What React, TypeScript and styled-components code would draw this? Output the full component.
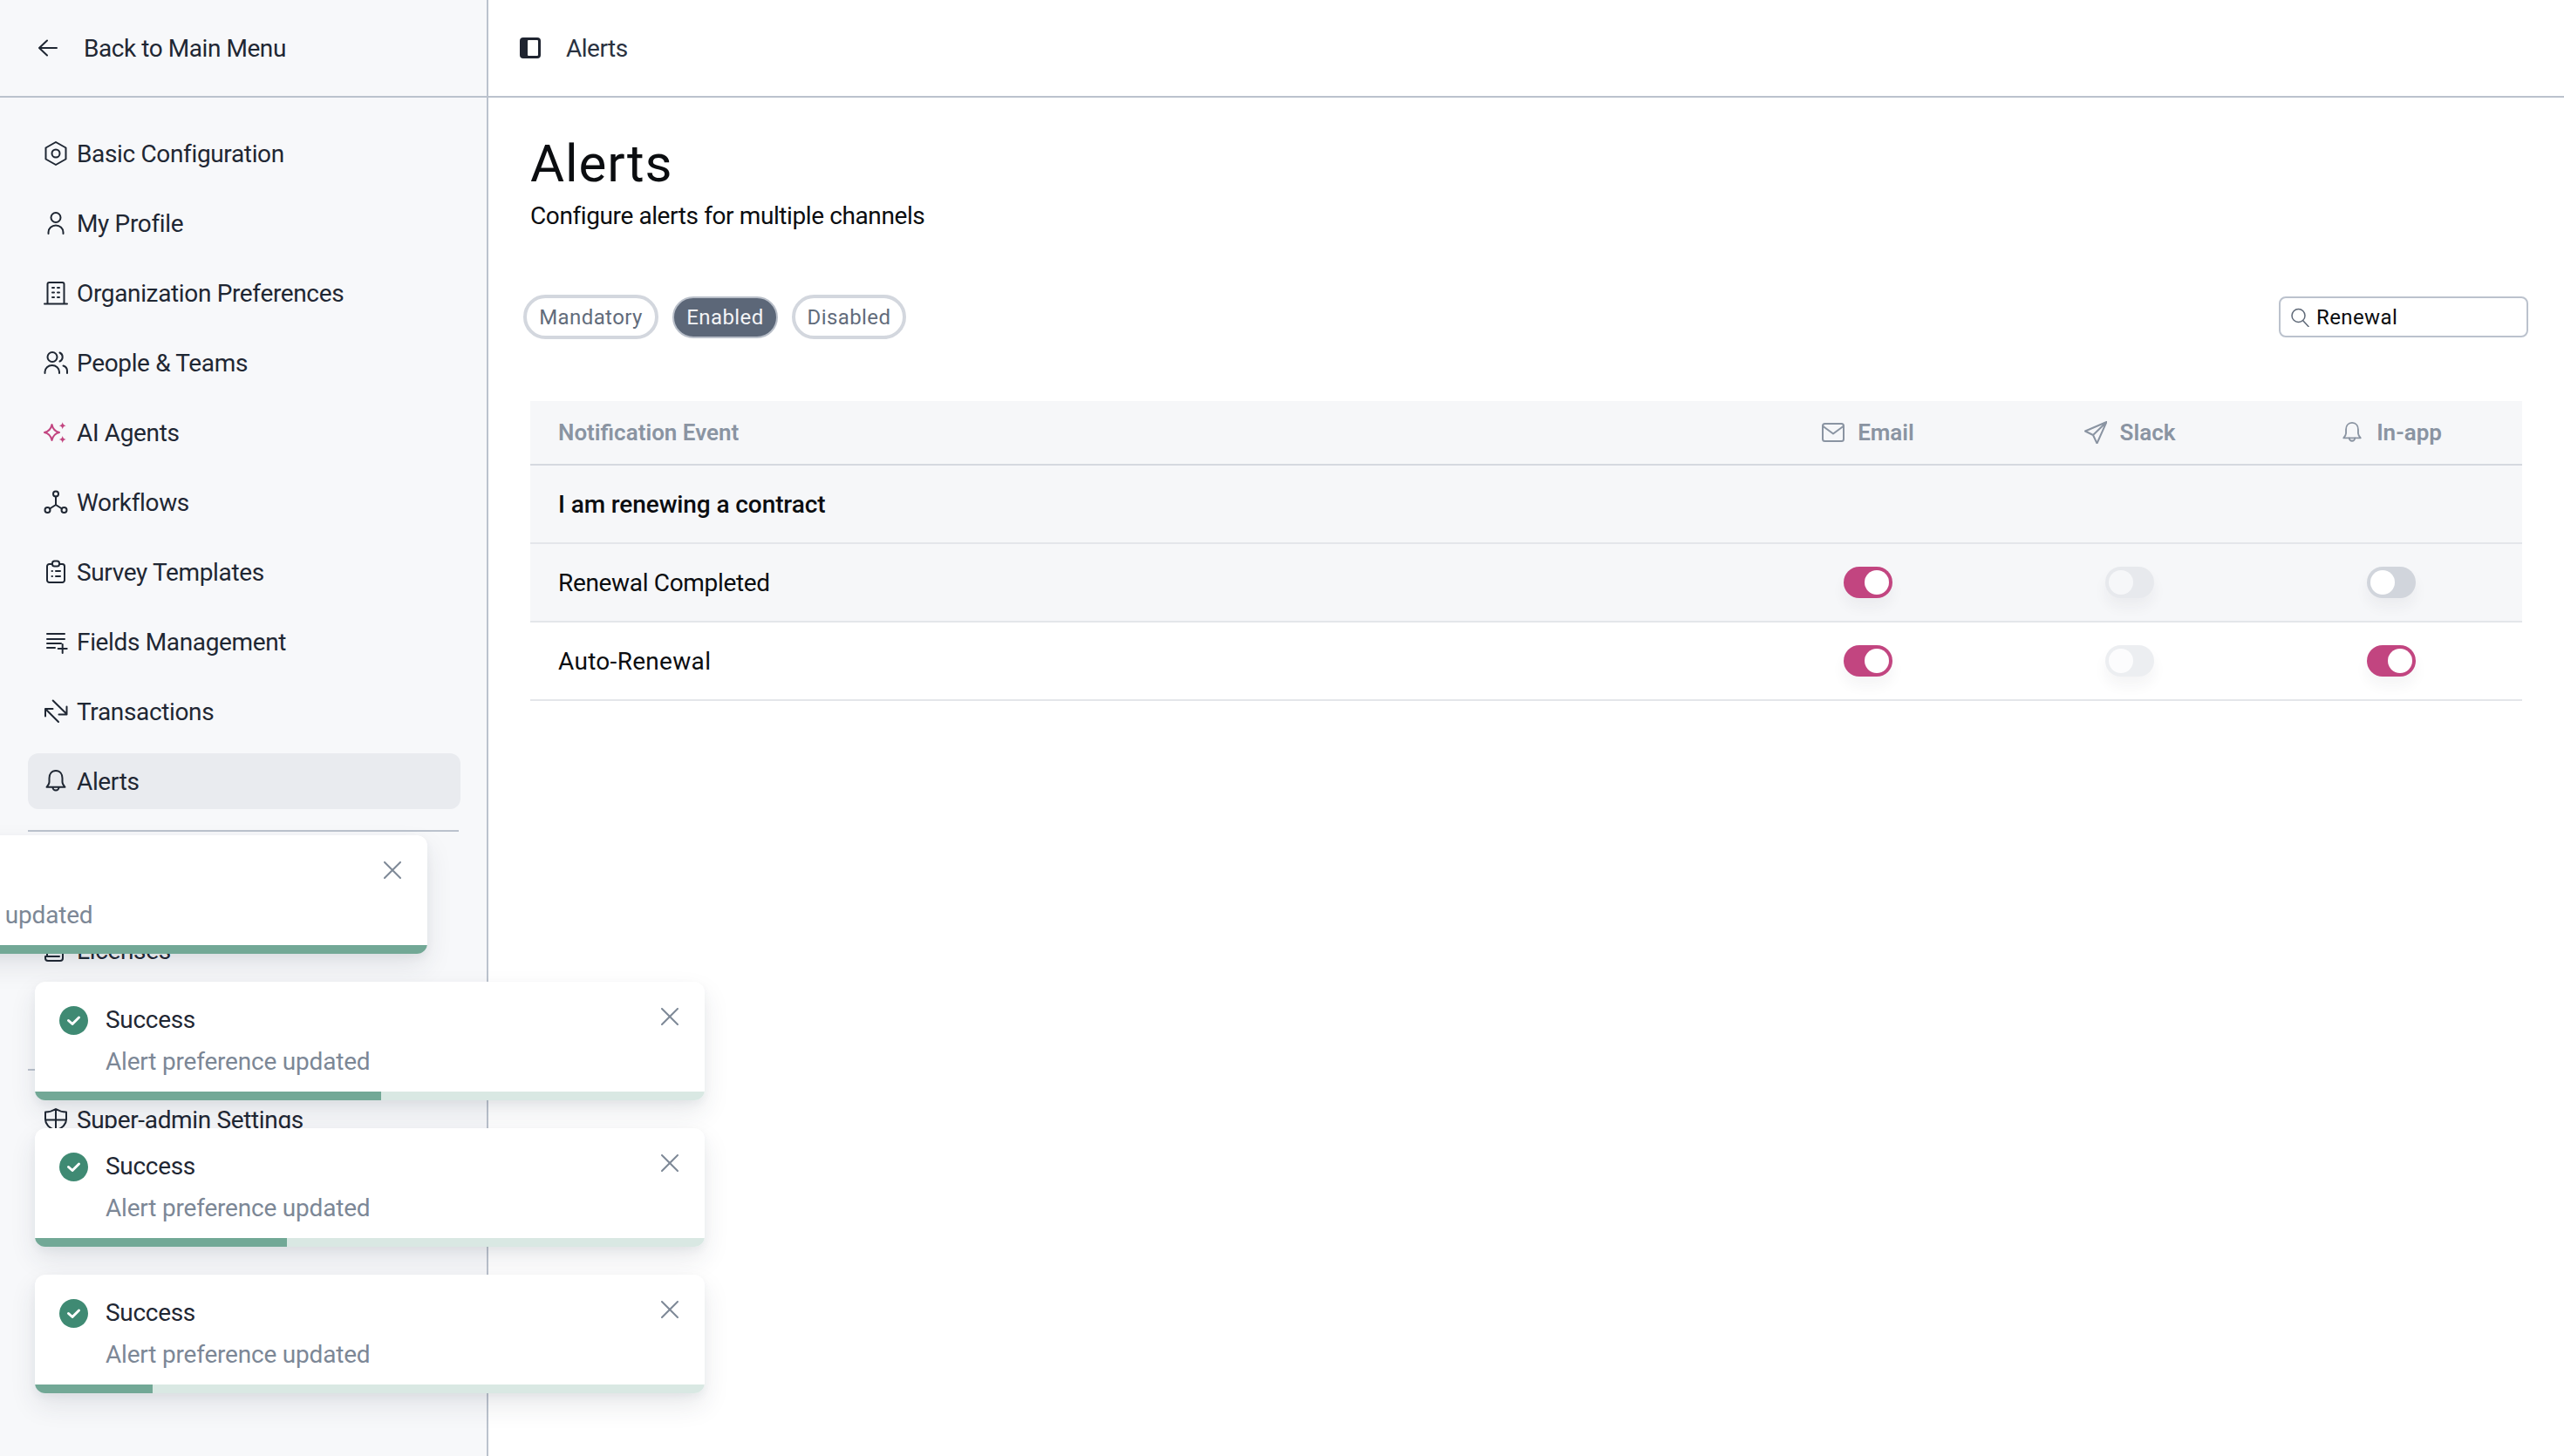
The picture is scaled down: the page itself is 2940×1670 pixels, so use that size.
import React from "react";
import styled, { createGlobalStyle } from "styled-components";

const Global = createGlobalStyle`
  * { box-sizing: border-box; }
  html, body { margin: 0; padding: 0; background: #fff; overflow: hidden; }
  body { font-family: Roboto, "Liberation Sans", sans-serif; color: #1f2733; }
`;

const Page = styled.div`
  display: flex;
  width: 2940px;
  height: 1670px;
  position: relative;
  overflow: hidden;
`;

const Sidebar = styled.aside`
  flex: 0 0 560px;
  background: #f7f8fa;
  border-right: 2px solid #bbc2cd;
  display: flex;
  flex-direction: column;
`;

const SideHeader = styled.div`
  height: 112px;
  border-bottom: 2px solid #bbc2cd;
  display: flex;
  align-items: center;
  gap: 30px;
  padding-left: 44px;
  font-size: 28px;
  letter-spacing: -0.44px;
  font-weight: 400;
  color: #1f2733;
`;

const Nav = styled.nav`
  padding: 32px 30px 0 32px;
  display: flex;
  flex-direction: column;
  gap: 16px;
`;

const NavRow = styled.div<{ $active?: boolean }>`
  height: 64px;
  border-radius: 12px;
  display: flex;
  align-items: center;
  gap: 10px;
  padding-left: 18px;
  font-size: 28px;
  letter-spacing: -0.35px;
  color: #1f2733;
  background: ${(p) => (p.$active ? "#e9ebef" : "transparent")};
`;

const Divider = styled.hr`
  border: 0;
  height: 2px;
  background: #bbc2cd;
  margin: 8px 0;
  width: 494px;
`;

const Main = styled.main`
  flex: 1;
  min-width: 0;
  display: flex;
  flex-direction: column;
`;

const TopBar = styled.header`
  height: 112px;
  border-bottom: 2px solid #bbc2cd;
  display: flex;
  align-items: center;
  gap: 29px;
  padding-left: 36px;
  font-size: 28px;
  letter-spacing: -0.5px;
  color: #2a3240;
`;

const Content = styled.div`
  padding: 40px 48px 0;
`;

const Title = styled.h1`
  margin: 0;
  font-size: 60px;
  line-height: 72px;
  letter-spacing: 0.9px;
  font-weight: 400;
  color: #0b0d10;
`;

const Subtitle = styled.p`
  margin: 4px 0 0;
  font-size: 28px;
  line-height: 40px;
  letter-spacing: -0.4px;
  color: #0b0d10;
`;

const Filters = styled.div`
  display: flex;
  align-items: center;
  justify-content: space-between;
  margin: 70px -7px 0 -8px;
  height: 51px;
`;

const Pills = styled.div`
  display: flex;
  align-items: center;
  gap: 16px;
`;

const Pill = styled.div<{ $on?: boolean; $w: number }>`
  width: ${(p) => p.$w}px;
  height: ${(p) => (p.$on ? 48 : 51)}px;
  border-radius: 26px;
  border: ${(p) => (p.$on ? "2px solid #b9bfc9" : "4px solid #d3d7de")};
  background: ${(p) => (p.$on ? "#5c6778" : "#fff")};
  color: ${(p) => (p.$on ? "#f3f4f6" : "#626c7b")};
  font-size: 24px;
  letter-spacing: 0.4px;
  display: flex;
  align-items: center;
  justify-content: center;
`;

const SearchBox = styled.div`
  width: 286px;
  height: 47px;
  border: 2px solid #bbc2cd;
  border-radius: 8px;
  background: #fff;
  display: flex;
  align-items: center;
  gap: 8px;
  padding-left: 11px;
  font-size: 24px;
  letter-spacing: 0.4px;
  color: #0b0d10;
`;

const Table = styled.div`
  margin-top: 71px;
  display: flex;
  flex-direction: column;
`;

const Row = styled.div<{ $bg?: string; $h: number; $line: string }>`
  display: grid;
  grid-template-columns: 1fr 300px 300px 300px;
  align-items: center;
  height: ${(p) => p.$h}px;
  background: ${(p) => p.$bg ?? "transparent"};
  border-bottom: 2px solid ${(p) => p.$line};
`;

const EventCell = styled.div<{ $strong?: boolean; $track?: number }>`
  padding-left: 32px;
  font-size: 28px;
  letter-spacing: ${(p) => p.$track ?? 0}px;
  font-weight: ${(p) => (p.$strong ? 500 : 400)};
  color: #0b0d10;
`;

const HeadCell = styled.div`
  padding-left: 32px;
  font-size: 26px;
  font-weight: 600;
  color: #8a94a2;
`;

const ChannelHead = styled.div`
  display: flex;
  align-items: center;
  justify-content: center;
  gap: 15px;
  font-size: 26px;
  font-weight: 600;
  color: #8a94a2;
`;

const ToggleCell = styled.div`
  display: flex;
  justify-content: center;
`;

const Track = styled.div<{ $on?: boolean; $tone?: "normal" | "dim" | "faint" }>`
  width: 56px;
  height: 36px;
  border-radius: 18px;
  padding: 4px;
  display: flex;
  justify-content: ${(p) => (p.$on ? "flex-end" : "flex-start")};
  box-shadow: 0 10px 16px rgba(30, 40, 60, 0.05);
  background: ${(p) =>
    p.$on ? "#c24580" : p.$tone === "dim" ? "#e7e9ed" : p.$tone === "faint" ? "#eceef1" : "#d1d5dc"};
`;

const Thumb = styled.div<{ $tone?: "normal" | "dim" | "faint" }>`
  width: 28px;
  height: 28px;
  border-radius: 50%;
  background: ${(p) => (p.$tone === "dim" ? "#f6f7f9" : p.$tone === "faint" ? "#fcfcfd" : "#fff")};
`;

const ToastStack = styled.div`
  position: absolute;
  left: 40px;
  top: 958px;
  display: flex;
  flex-direction: column;
  gap: 32px;
  z-index: 5;
`;

const ToastCard = styled.div<{ $shift?: number }>`
  width: 768px;
  height: 136px;
  background: #fff;
  border-radius: 12px;
  overflow: hidden;
  display: flex;
  flex-direction: column;
  box-shadow: 0 14px 30px rgba(40, 50, 70, 0.1), 0 4px 10px rgba(40, 50, 70, 0.05);
  transform: translateX(${(p) => p.$shift ?? 0}px);
`;

const ToastBody = styled.div`
  flex: 1;
  display: grid;
  grid-template-columns: 33px 1fr 20px;
  column-gap: 20px;
  padding: 26px 30px 0 28px;
  align-content: start;
`;

const ToastMark = styled.svg`
  display: block;
  width: 33px;
  height: 33px;
  margin-top: 2px;
`;

const ToastTitle = styled.div`
  font-size: 28px;
  line-height: 36px;
  letter-spacing: -0.3px;
  color: #1f2733;
`;

const ToastText = styled.div`
  grid-column: 2 / 3;
  margin-top: 12px;
  font-size: 28px;
  line-height: 36px;
  letter-spacing: -0.2px;
  color: #7c8796;
`;

const ProgressTrack = styled.div`
  height: 10px;
  background: #d9e8e3;
`;

const ProgressFill = styled.div`
  height: 100%;
  background: #72a896;
`;

const IconBox = styled.svg<{ $tone?: string }>`
  flex: 0 0 auto;
  width: 28px;
  height: 28px;
  fill: none;
  stroke: ${(p) => p.$tone ?? "#1f2733"};
  stroke-width: 2;
  stroke-linecap: round;
  stroke-linejoin: round;
`;

const SmallGlyph = styled.svg<{ $size: number; $tone?: string; $stroke?: number }>`
  flex: 0 0 auto;
  width: ${(p) => p.$size}px;
  height: ${(p) => p.$size}px;
  fill: none;
  stroke: ${(p) => p.$tone ?? "#1f2733"};
  stroke-width: ${(p) => p.$stroke ?? 2};
  stroke-linecap: round;
  stroke-linejoin: round;
`;

const CloseGlyph = styled(SmallGlyph)`
  margin-top: 4px;
`;

const Solid = styled.path`
  fill: #c24580;
  stroke: none;
`;

const navIcons: Record<string, React.ReactNode> = {
  hex: (
    <>
      <path d="M14 1 25.5 7.5V20.5L14 27 2.5 20.5V7.5Z" />
      <circle cx="14" cy="14" r="4.5" />
    </>
  ),
  user: (
    <>
      <circle cx="14" cy="7.5" r="5.5" />
      <path d="M5.5 26v-1.5a8.5 8 0 0 1 17 0V26" />
    </>
  ),
  building: (
    <>
      <path d="M4.5 26V4a2 2 0 0 1 2-2h15a2 2 0 0 1 2 2v22M1 26.5h26" />
      <path d="M10 8h2M16 8h2M10 13.5h2M16 13.5h2M10 19h2M16 19h2" />
    </>
  ),
  users: (
    <>
      <circle cx="10" cy="7.5" r="5.5" />
      <path d="M18.5 2.5a5.5 5.5 0 0 1 0 10M1.5 26v-1.5a8.2 7.5 0 0 1 16.5 0V26M22.5 17.5c3 1 4.5 3.5 4.5 6V26" />
    </>
  ),
  ai: (
    <>
      <path d="M9.5 5c1 5 3.5 7.8 8.5 9-5 1.2-7.500 4-8.500 9-1-5-3.500-7.800-8.500-9 5-1.200 7.500-4 8.500-9Z" />
      <Solid d="M21.700 2.300c.5 2.500 1.500 3.500 4 4-2.500.5-3.500 1.500-4 4-.5-2.500-1.500-3.500-4-4 2.500-.5 3.500-1.500 4-4Z" />
      <Solid d="M21.700 18c.5 2.500 1.500 3.500 4 4-2.500.5-3.500 1.500-4 4-.5-2.500-1.500-3.500-4-4 2.500-.5 3.500-1.500 4-4Z" />
    </>
  ),
  flow: (
    <>
      <circle cx="14" cy="4.500" r="3" />
      <circle cx="4.500" cy="23" r="3" />
      <circle cx="23.500" cy="23" r="3" />
      <path d="M14 7.500V17M14 17l-7 4.500M14 17l7 4.500" />
    </>
  ),
  clip: (
    <>
      <path d="M10 5H6.500A2.500 2.500 0 0 0 4 7.500v16A2.500 2.500 0 0 0 6.500 26h15a2.500 2.500 0 0 0 2.500-2.500v-16A2.500 2.500 0 0 0 21.500 5H18" />
      <rect x="10" y="1.500" width="8" height="6" rx="2.500" />
      <path d="M9.500 13h.5M14 13h5M9.500 19h.5M14 19h5" />
    </>
  ),
  fields: <path d="M4 5h20M4 11h20M4 16h16M4 21h9M21.700 17v10M16.700 22h10" />,
  swap: <path d="M10.700 1.500 26.500 17M26.500 8.500V17.500H17.500M17 26 2 11M2 19.500V11H10.500" />,
  bell: (
    <>
      <path d="M14 2C9 2 6.500 6 6.500 10.500V15C6.500 17 5 19 3.500 20.800H24.500C23 19 21.500 17 21.500 15V10.500C21.500 6 19 2 14 2Z" />
      <path d="M10.500 21a3.500 3.500 0 0 0 7 0" />
    </>
  ),
  license: <path d="M4 3v18M22 3v20a3 3 0 0 1-3 3H5a3 3 0 0 1-3-3v-2h16" />,
  shield: (
    <path d="M14 2C10 4.500 6 5.500 2 5.500V14c0 6 5 10 12 13 7-3 12-7 12-13V5.500C22 5.500 18 4.500 14 2ZM14 2v25M2 14.500h24" />
  ),
};

const NavItem = ({ icon, label, active, tone }: { icon: string; label: string; active?: boolean; tone?: string }) => (
  <NavRow $active={active}>
    <IconBox viewBox="0 0 28 28" $tone={tone}>
      {navIcons[icon]}
    </IconBox>
    {label}
  </NavRow>
);

const Toggle = ({ on, tone }: { on?: boolean; tone?: "normal" | "dim" | "faint" }) => (
  <ToggleCell>
    <Track $on={on} $tone={tone}>
      <Thumb $tone={tone} />
    </Track>
  </ToggleCell>
);

const Toast = ({ progress, shift }: { progress: number; shift?: number }) => (
  <ToastCard $shift={shift}>
    <ToastBody>
      <ToastMark viewBox="0 0 33 33" role="img" aria-label="ok">
        <circle cx="16.500" cy="16.500" r="16.500" fill="#3f8a73" />
        <path d="M10.500 16.500l4.500 4 7.500-7.500" fill="none" stroke="#fff" strokeWidth="3" strokeLinecap="round" strokeLinejoin="round" />
      </ToastMark>
      <ToastTitle>Success</ToastTitle>
      <CloseGlyph viewBox="0 0 20 20" $size={20} $tone="#7e8997">
        <path d="M1 1 19 19M19 1 1 19" />
      </CloseGlyph>
      <ToastText>Alert preference updated</ToastText>
    </ToastBody>
    <ProgressTrack>
      <ProgressFill style={{ width: `${progress}px` }} />
    </ProgressTrack>
  </ToastCard>
);

export default function App() {
  return (
    <Page>
      <Global />
      <Sidebar>
        <SideHeader>
          <SmallGlyph viewBox="0 0 22 22" $size={22}>
            <path d="M21 11H1M10 2.500 1 11l9 8.500" />
          </SmallGlyph>
          Back to Main Menu
        </SideHeader>
        <Nav>
          <NavItem icon="hex" label="Basic Configuration" />
          <NavItem icon="user" label="My Profile" />
          <NavItem icon="building" label="Organization Preferences" />
          <NavItem icon="users" label="People & Teams" />
          <NavItem icon="ai" label="AI Agents" tone="#c24580" />
          <NavItem icon="flow" label="Workflows" />
          <NavItem icon="clip" label="Survey Templates" />
          <NavItem icon="fields" label="Fields Management" />
          <NavItem icon="swap" label="Transactions" />
          <NavItem icon="bell" label="Alerts" active />
          <Divider />
          <NavRow />
          <NavItem icon="license" label="Licenses" />
          <NavRow />
          <Divider />
          <NavItem icon="shield" label="Super-admin Settings" />
        </Nav>
      </Sidebar>
      <Main>
        <TopBar>
          <svg width="24" height="24" viewBox="0 0 24 24" role="img" aria-label="panel">
            <rect width="24" height="24" rx="4" fill="#1f2430" />
            <rect x="9" y="3" width="12" height="18" rx="1" fill="#fff" />
          </svg>
          Alerts
        </TopBar>
        <Content>
          <Title>Alerts</Title>
          <Subtitle>Configure alerts for multiple channels</Subtitle>
          <Filters>
            <Pills>
              <Pill $w={155}>Mandatory</Pill>
              <Pill $w={121} $on>
                Enabled
              </Pill>
              <Pill $w={131}>Disabled</Pill>
            </Pills>
            <SearchBox>
              <SmallGlyph viewBox="0 0 22 22" $size={22} $tone="#5f6978" $stroke={1.5}>
                <circle cx="9.500" cy="9" r="7.500" />
                <path d="M15 15l6 6.500" />
              </SmallGlyph>
              Renewal
            </SearchBox>
          </Filters>
          <Table>
            <Row $bg="#f6f7f9" $h={74} $line="#d5d9df">
              <HeadCell>Notification Event</HeadCell>
              <ChannelHead>
                <SmallGlyph viewBox="0 0 26 22" $size={26} $tone="#8a94a2">
                  <rect x="1" y="1" width="24" height="20" rx="2.500" />
                  <path d="M1.500 4 13 12.500 24.500 4" />
                </SmallGlyph>
                Email
              </ChannelHead>
              <ChannelHead>
                <SmallGlyph viewBox="0 0 26 26" $size={26} $tone="#8a94a2">
                  <path d="M25.500 1 1 11.500l9 4.500 4.500 9.500ZM25.500 1 10 16" />
                </SmallGlyph>
                Slack
              </ChannelHead>
              <ChannelHead>
                <SmallGlyph viewBox="0 0 28 28" $size={26} $tone="#8a94a2">
                  {navIcons.bell}
                </SmallGlyph>
                In-app
              </ChannelHead>
            </Row>
            <Row $bg="#f6f7f9" $h={90} $line="#e4e6ea">
              <EventCell $strong $track={-0.1}>I am renewing a contract</EventCell>
            </Row>
            <Row $bg="#f6f7f9" $h={90} $line="#e4e6ea">
              <EventCell $track={-0.33}>Renewal Completed</EventCell>
              <Toggle on />
              <Toggle tone="dim" />
              <Toggle />
            </Row>
            <Row $h={90} $line="#e4e6ea">
              <EventCell $track={0.3}>Auto-Renewal</EventCell>
              <Toggle on />
              <Toggle tone="faint" />
              <Toggle on />
            </Row>
          </Table>
        </Content>
      </Main>
      <ToastStack>
        <Toast progress={768} shift={-318} />
        <Toast progress={397} />
        <Toast progress={289} />
        <Toast progress={135} />
      </ToastStack>
    </Page>
  );
}
